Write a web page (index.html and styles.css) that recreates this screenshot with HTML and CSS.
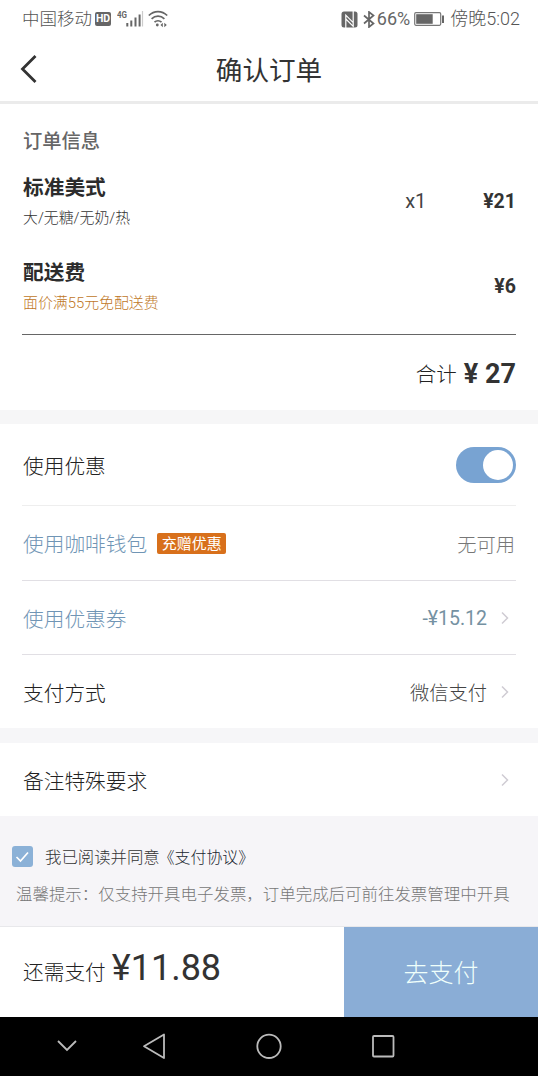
FILE: index.html
```html
<!DOCTYPE html>
<html lang="zh-CN">
<head>
<meta charset="utf-8">
<title>确认订单</title>
<link rel="stylesheet" href="styles.css">
</head>
<body>
<div class="screen">
  <div class="status">
    <span class="carrier">中国移动</span>
    <span class="hd">HD</span>
    <svg class="signal" width="28" height="24" viewBox="0 0 28 24">
      <text class="net" x="0" y="9.500" textLength="10" lengthAdjust="spacingAndGlyphs">4G</text>
      <path d="M10.300 18.500v-3.500M14.300 18.500v-6M18.500 18.500v-9M22.600 18.500V6.500" stroke="#666" stroke-width="2"/>
      <path d="M25.500 18.500V3" stroke="#ccc" stroke-width="1.200"/>
    </svg>
    <svg class="wifi" width="20" height="18" viewBox="0 0 20 18" fill="none" stroke="#666" stroke-width="1.700">
      <path d="M.8 5.500C6 .2 14 .2 19.200 5.500M3.600 8.900c3.700-3.600 9.100-3.600 12.800 0M6.500 12.200c2-1.900 5-1.900 7 0"/>
      <circle cx="9.300" cy="15" r="1.400" fill="#666" stroke="none"/>
      <path d="M14.800 12.700v4.600l-2.300-2.300zM16.300 12.700v4.600l2.500-2.300z" fill="#666" stroke="none"/>
    </svg>
    <span class="grow"></span>
    <svg class="nfc" width="17" height="17" viewBox="0 0 17 17">
      <rect x=".5" y=".5" width="16" height="16" rx="2.500" fill="#666"/>
      <path d="M4.800 17V4.200l7.400 7.400V0M4.800 4.200V8l7.400 7.400v-4" stroke="#fff" stroke-width="1.200" fill="none"/>
    </svg>
    <svg class="bt" width="12" height="17" viewBox="0 0 12 17" fill="none" stroke="#666" stroke-width="1.700">
      <path d="M1 4.500l9.500 8L6 16V1l4.500 3.500L1 12.500"/>
    </svg>
    <span class="percent">66%</span>
    <svg class="battery" width="31" height="16" viewBox="0 0 31 16">
      <rect x=".7" y="1.700" width="26" height="12.600" rx="1.200" fill="none" stroke="#777" stroke-width="1.200"/>
      <rect x="2.200" y="3.200" width="16.500" height="9.600" fill="#666"/>
      <path d="M29 4.500v7.500" stroke="#666" stroke-width="2"/>
    </svg>
    <span class="time">傍晚5:02</span>
  </div>

  <header class="header">
    <svg class="back" width="18" height="30" viewBox="0 0 18 30"><path d="M15.500 2L2.500 15l13 13" fill="none" stroke="#333" stroke-width="2.800"/></svg>
    <h1 class="title">确认订单</h1>
  </header>

  <section class="order">
    <h2 class="order-title">订单信息</h2>
    <div class="item">
      <div class="item-info"><div class="name">标准美式</div><div class="desc">大/无糖/无奶/热</div></div>
      <span class="qty">x1</span><span class="price">¥21</span>
    </div>
    <div class="item fee">
      <div class="item-info"><div class="name">配送费</div><div class="desc promo">面价满55元免配送费</div></div>
      <span class="price">¥6</span>
    </div>
    <div class="total"><span class="total-label">合计</span><span class="total-value">¥ 27</span></div>
  </section>

  <section class="options">
    <div class="row discount"><span>使用优惠</span><span class="toggle"><span class="knob"></span></span></div>
    <div class="row wallet"><span class="blue">使用咖啡钱包</span><span class="badge">充赠优惠</span><span class="value none">无可用</span></div>
    <div class="row coupon"><span class="blue">使用优惠券</span><span class="value amount">-¥15.12</span>
      <svg class="arrow" width="10" height="16" viewBox="0 0 10 16"><path d="M2 2.500L7.500 8 2 13.500"/></svg></div>
    <div class="row method"><span>支付方式</span><span class="value">微信支付</span>
      <svg class="arrow" width="10" height="16" viewBox="0 0 10 16"><path d="M2 2.500L7.500 8 2 13.500"/></svg></div>
  </section>

  <section class="remark">
    <div class="row note"><span>备注特殊要求</span><span class="value"></span>
      <svg class="arrow" width="10" height="16" viewBox="0 0 10 16"><path d="M2 2.500L7.500 8 2 13.500"/></svg></div>
  </section>

  <section class="terms">
    <div class="agree">
      <span class="check"><svg width="21" height="21" viewBox="0 0 21 21"><path d="M4.500 11l4 4 7.500-8.500" fill="none" stroke="#fff" stroke-width="1.700"/></svg></span>
      <span class="agree-text">我已阅读并同意<span class="link">《支付协议》</span></span>
    </div>
    <p class="tip">温馨提示：仅支持开具电子发票，订单完成后可前往发票管理中开具</p>
  </section>

  <footer class="pay">
    <div class="due"><span>还需支付</span><span class="sum">¥11.88</span></div>
    <div class="pay-button">去支付</div>
  </footer>

  <nav class="nav">
    <svg width="538" height="59" viewBox="0 0 538 59" fill="none" stroke="#bbb" stroke-width="1.800">
      <path d="M58 24l9 9 9-9"/>
      <path d="M164 17.500v23.500L144 29.300z" stroke-linejoin="round"/>
      <circle cx="269" cy="29.300" r="11.700"/>
      <rect x="373" y="19" width="20.500" height="20.500" rx="1"/>
    </svg>
  </nav>
</div>
</body>
</html>
```
FILE: styles.css
```css
* { box-sizing: border-box; }
body {
  margin: 0;
  background: #fff;
  font-family: Roboto, "Noto Sans CJK SC", sans-serif;
  font-weight: 300;
  color: #222;
}
.screen { width: 538px; height: 1076px; display: flex; flex-direction: column; overflow: hidden; white-space: nowrap; }
.screen > * { flex-shrink: 0; }

.status { height: 38px; padding: 0 18px 0 22px; display: flex; align-items: center; font-size: 17.500px; line-height: 24px; color: #555; }
.hd { width: 16px; height: 14px; margin-left: 3px; border-radius: 2px; background: #666; color: #fff; font-size: 10.500px; font-weight: 700; line-height: 14px; text-align: center; }
.signal { margin-left: 6px; margin-top: 2px; }
.net { font-size: 9.500px; font-weight: 700; fill: #666; }
.wifi { margin-left: 3px; }
.grow { flex: 1; }
.nfc { margin-right: 5px; }
.bt { margin-right: 2px; }
.percent { font-size: 18px; font-weight: 400; color: #666; }
.battery { margin: 0 5px 0 4px; }
.time { font-size: 18px; }

.header { height: 66px; border-bottom: 3px solid #ebebeb; display: grid; grid-template-columns: 60px 1fr 60px; align-items: center; }
.back { margin-left: 20px; margin-top: -1px; }
.title { margin: 3px 0 0; font-size: 26.600px; font-weight: 400; line-height: 36px; text-align: center; color: #333; }

.order { height: 306px; padding: 24px 22px 0 22px; }
.order-title { margin: 0 0 0 1px; font-size: 19.300px; font-weight: 500; line-height: 28px; color: #666; }
.item { margin-top: 16px; height: 58px; display: flex; align-items: center; }
.fee { margin-top: 27px; }
.item-info { flex: 1; padding-left: 1px; }
.name { font-size: 20.700px; font-weight: 700; line-height: 30px; color: #2c2c2c; }
.desc { margin-top: 3px; font-size: 14.900px; line-height: 24px; color: #333; }
.promo { color: #c0771f; }
.qty { width: 78px; font-size: 20px; font-weight: 400; color: #444; }
.price { font-size: 19.500px; font-weight: 700; color: #333; }
.total { margin-top: 19px; border-top: 1px solid #666; height: 78px; display: flex; align-items: center; justify-content: flex-end; gap: 7px; }
.total-label { padding-bottom: 2px; font-size: 20.500px; }
.total-value { font-size: 27px; font-weight: 700; color: #333; }

.options { border-top: 14px solid #f6f6f7; padding: 0 22px 0 22px; }
.row { display: flex; align-items: center; font-size: 20.700px; line-height: 30px; }
.row > span:first-child { padding-top: 4px; padding-left: 1px; }
.discount { height: 82px; border-bottom: 1px solid #eee; }
.wallet, .coupon { border-bottom: 1px solid #e1dfe4; }
.wallet { height: 75px; }
.coupon { height: 74px; }
.method { height: 73px; }
.toggle { margin-left: auto; width: 60px; height: 36px; padding: 3px; border-radius: 18px; background: #78a3d2; display: flex; justify-content: flex-end; }
.knob { width: 30px; height: 30px; border-radius: 50%; background: #fff; }
.blue { color: #7095b5; }
.badge { margin-left: 10px; width: 69px; height: 21px; border-radius: 2px; background: #d8701b; color: #fff; font-size: 15px; font-weight: 400; line-height: 22px; text-align: center; }
.value { margin-left: auto; padding-top: 4px; font-size: 19.300px; color: #444; }
.none { margin-right: 1px; padding-top: 5px; color: #777; }
.amount { padding-top: 3px; font-weight: 400; color: #7591a2; font-size: 19.500px; }
.arrow { margin: 0 6px 0 13px; fill: none; stroke: #cfccd3; stroke-width: 1.500; }

.remark { border-top: 15px solid #f6f6f8; padding: 0 22px 0 22px; }
.note { height: 73px; }

.terms { height: 111px; padding: 29px 0 0 12px; background: #f6f5f8; border-bottom: 1px solid #e8e8eb; }
.agree { display: flex; align-items: center; gap: 12px; height: 24px; font-size: 16.400px; color: #333; }
.agree-text { margin-top: -2px; }
.check { width: 21px; height: 21px; margin-top: -1px; border-radius: 3px; background: #8bb1d7; }
.check svg { display: block; }
.link { margin-left: -1px; font-size: 15.900px; color: #18262f; }
.tip { margin: 14px 0 0 4px; font-size: 16.470px; line-height: 24px; color: #777; }

.pay { height: 90px; display: flex; }
.due { flex: 1; padding-left: 23px; display: flex; align-items: baseline; gap: 6px; font-size: 20.700px; line-height: 82px; }
.sum { font-size: 36px; font-weight: 400; color: #333; }
.pay-button { width: 194px; background: #8aadd6; color: #effffb; font-size: 25px; line-height: 94px; text-align: center; }

.nav { height: 60px; background: #000; }
.nav svg { display: block; }
```
